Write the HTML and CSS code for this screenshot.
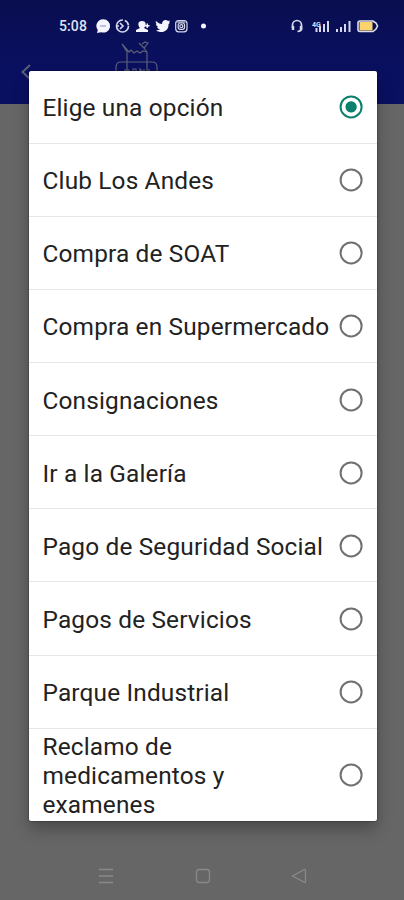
FILE: index.html
```
<!DOCTYPE html>
<html lang="es">
<head>
<meta charset="utf-8">
<title>Elige una opción</title>
<link rel="stylesheet" href="styles.css">
</head>
<body>
<div class="screen">
  <header class="header">
    <div class="status">
      <span class="time">5:08</span>
      <svg class="notifications" width="116" height="18" viewBox="0 0 116 18">
        <path class="fill" d="M8 2.200a6.800 6.700 0 1 1-2 13l-4 .8.800-3A6.700 6.700 0 0 1 8 2.200z"/>
        <path class="cut" d="M5 9h6"/>
        <g class="line"><circle cx="27.500" cy="9" r="6" stroke-dasharray="28 2 6 1.700"/><path d="M21 9h3M25 6l3 3-3 3"/></g>
        <path class="fill" d="M47 4c5 0 4 5 2 7l4 2v2H41v-2l4-2c-2-2-3-7 2-7zM50 8h1.500V6.500H53V8h1.500v1.500H53V11h-1.500V9.500H50z"/>
        <path class="fill" d="M61 4c2 2 4 3 6 3 0-4 4-5 6-3l2-.5-1 2 1 .2-1.500 1.500C74 14 67 17 61 13.500c2 0 3-.5 4-1.200-2-.3-2.500-1.300-2.800-2.300h1C61.500 9 61 8 61 7l1 .3C60.500 6 60.500 5 61 4z"/>
        <g class="line thin"><rect x="80.700" y="3.500" width="11.300" height="11.300" rx="3"/><rect x="83.200" y="6" width="6.300" height="6.300" rx="2"/><circle cx="86.300" cy="9.200" r="1.500"/><path d="M82 5h8.500"/></g>
        <circle class="fill" cx="108.500" cy="9" r="2.500"/>
      </svg>
      <svg class="system" width="92" height="18" viewBox="0 0 92 18">
        <g class="line"><path d="M2.500 11V8a4.500 4.500 0 0 1 9 0v4q0 2-4 2.500"/><path d="M3 9v4M11 9v4" stroke-width="2.500"/></g>
        <text class="network" x="22" y="10">4G</text>
        <path class="bars" d="M26.500 15v-4M30 15V9M34 15V7M38 15V4M47 15v-3M51 15v-5M55 15V7M59.500 15V4"/>
        <path class="battery" d="M70 4h13l3 2 1.500 3-1.500 3-3 2.500H70q-2 0-2-2V6q0-2 2-2z"/>
        <rect class="charge" x="69.500" y="5" width="13" height="8.500"/>
      </svg>
    </div>
    <div class="toolbar">
      <svg class="back" width="14" height="18" viewBox="0 0 14 18"><path d="M10 2L2.500 9l7.500 7"/></svg>
      <svg class="logo" width="48" height="34" viewBox="0 0 48 34"><path d="M3 34v-7q0-5 5-5h31q5 0 5 5v7M14 33V12L9 4M9 4l7 8 2-2 3 3 3-2 3 2 3-2 4 1M34 33V12M26 3l5 5 4-5-3-1-3 2M31 8l3 4M12 33v-3h4v3M20 33v-4h3v4M27 33v-4l4 4v-4M36 33v-4"/></svg>
    </div>
  </header>
  <main class="page"></main>
  <nav class="nav">
    <svg width="16" height="16" viewBox="0 0 16 16"><path d="M1 1.500h14M1 8h14M1 14.500h14"/></svg>
    <svg width="16" height="16" viewBox="0 0 16 16"><rect x="1.500" y="1.500" width="13" height="13" rx="2.500"/></svg>
    <svg width="16" height="16" viewBox="0 0 16 16"><path d="M13.500 1.500q1 0 1 1v11q0 1-1 .8L1.500 8z"/></svg>
  </nav>
  <div class="dialog">
    <div class="option"><span>Elige una opción</span><i class="radio selected"></i></div>
    <div class="option"><span>Club Los Andes</span><i class="radio"></i></div>
    <div class="option"><span>Compra de SOAT</span><i class="radio"></i></div>
    <div class="option"><span>Compra en Supermercado</span><i class="radio"></i></div>
    <div class="option"><span>Consignaciones</span><i class="radio"></i></div>
    <div class="option"><span>Ir a la Galería</span><i class="radio"></i></div>
    <div class="option"><span>Pago de Seguridad Social</span><i class="radio"></i></div>
    <div class="option"><span>Pagos de Servicios</span><i class="radio"></i></div>
    <div class="option"><span>Parque Industrial</span><i class="radio"></i></div>
    <div class="option tall"><span>Reclamo de<br>medicamentos y<br>examenes</span><i class="radio"></i></div>
  </div>
</div>
</body>
</html>
```
FILE: styles.css
```
* { box-sizing: border-box; }
body { margin: 0; font-family: Roboto, sans-serif; }
svg { display: block; fill: none; flex: none; }
.screen {
  position: relative;
  width: 404px;
  height: 900px;
  overflow: hidden;
  display: flex;
  flex-direction: column;
  background: #666;
}
.header { height: 104px; background: linear-gradient(#090e50, #0a1060 65%, #0a1060); }
.status { height: 36px; padding: 17px 0 0 59px; display: flex; }
.time { width: 36px; font-size: 14px; font-weight: 500; line-height: 18px; color: #dfe1f2; letter-spacing: .1px; }
.notifications { width: 116px; }
.system { margin-left: 79px; }
.fill { fill: #f4f5ff; }
.cut { stroke: #888bb4; stroke-width: 1; }
.line { stroke: #d6d8eb; stroke-width: 1.7; }
.thin { stroke-width: 1.2; }
.network { fill: #d6d8eb; font-size: 7px; font-weight: 700; }
.bars { stroke: #d6d8eb; stroke-width: 2; }
.battery { stroke: #dedfea; stroke-width: 1.6; }
.charge { fill: #fbd36c; }
.toolbar { display: flex; padding: 4px 0 0 20px; }
.toolbar svg { stroke: #5b6077; stroke-width: 1.2; }
.toolbar .back { margin-top: 23px; stroke-width: 2; }
.logo { margin-left: 79px; }
.page { flex: 1; }
.nav { height: 48px; padding: 16px 97px 0 98px; display: flex; justify-content: space-between; }
.nav svg { stroke: #898989; stroke-width: 1.3; }
.dialog {
  position: absolute;
  left: 28.5px;
  top: 70.5px;
  width: 348px;
  height: 750.5px;
  background: #fff;
  border-radius: 2px;
  box-shadow: 0 0 2px rgba(0,0,0,.6), 0 8px 16px rgba(0,0,0,.28);
}
.option {
  height: 73.15px;
  padding: 0 14px;
  display: flex;
  align-items: center;
  justify-content: space-between;
  border-bottom: 1px solid #e6e6e6;
  font-size: 24.4px;
  font-weight: 375;
  line-height: 29px;
  letter-spacing: .16px;
  color: #222;
  white-space: nowrap;
}
.tall { height: 92px; border-bottom: 0; }
.option span { position: relative; top: 1px; }
.radio { width: 23px; height: 23px; flex: none; transform: translate(-.4px, .4px); border: 2px solid #707070; border-radius: 50%; }
.selected { border-color: #0b806c; background: radial-gradient(circle, #0b806c 5.2px, #fff 6px); }
```
